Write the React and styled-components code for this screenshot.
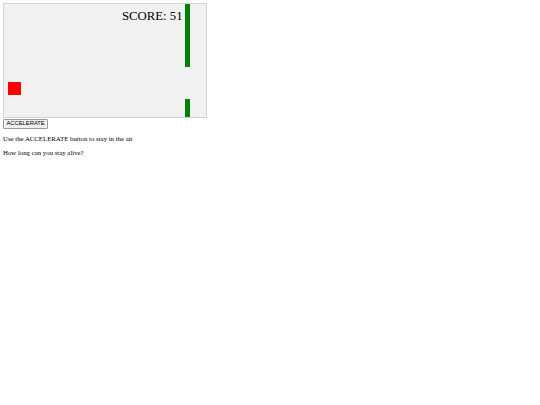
import React from "react";
import styled, { createGlobalStyle } from "styled-components";

const GlobalStyle = createGlobalStyle`
  html, body {
    margin: 0;
    background: #ffffff;
  }
  body {
    padding: 3px;
    font-family: "Liberation Serif", "Times New Roman", serif;
    font-size: 6.8px;
    color: #000000;
  }
`;

const Page = styled.div`
  display: flex;
  flex-direction: column;
  align-items: flex-start;
`;

const GameArea = styled.div`
  position: relative;
  width: 202px;
  height: 113px;
  background: #f1f1f1;
  border: 1px solid #d3d3d3;
  overflow: hidden;
`;

const Piece = styled.div`
  position: absolute;
  left: ${(p) => p.$x}px;
  top: ${(p) => p.$y}px;
  width: ${(p) => p.$w}px;
  height: ${(p) => p.$h}px;
  background: ${(p) => p.$color};
`;

const Score = styled.div`
  position: absolute;
  left: 118px;
  top: 6px;
  font-family: "Liberation Serif", "Times New Roman", serif;
  font-size: 12.75px;
  line-height: 1;
  color: #000000;
  white-space: nowrap;
`;

const ActionButton = styled.button`
  margin-top: 1px;
  height: 10px;
  padding: 0 2.5px;
  font-family: "Liberation Sans", Arial, sans-serif;
  font-size: 5.8px;
  line-height: 1;
  color: #000000;
  background: #efefef;
  border: 1px solid #9a9a9a;
  border-radius: 1px;
`;

const Notes = styled.div`
  display: flex;
  flex-direction: column;
  gap: 6.4px;
  padding-top: 6px;
`;

const Note = styled.p`
  margin: 0;
  line-height: 7.8px;
`;

export default function App() {
  return (
    <>
      <GlobalStyle />
      <Page>
        <GameArea>
          <Piece $x={4} $y={78} $w={13} $h={13} $color="#ff0000" />
          <Piece $x={181} $y={0} $w={4.5} $h={63} $color="#008000" />
          <Piece $x={181} $y={94.5} $w={4.5} $h={20} $color="#008000" />
          <Score>SCORE: 51</Score>
        </GameArea>
        <ActionButton>ACCELERATE</ActionButton>
        <Notes>
          <Note>Use the ACCELERATE button to stay in the air</Note>
          <Note>How long can you stay alive?</Note>
        </Notes>
      </Page>
    </>
  );
}
